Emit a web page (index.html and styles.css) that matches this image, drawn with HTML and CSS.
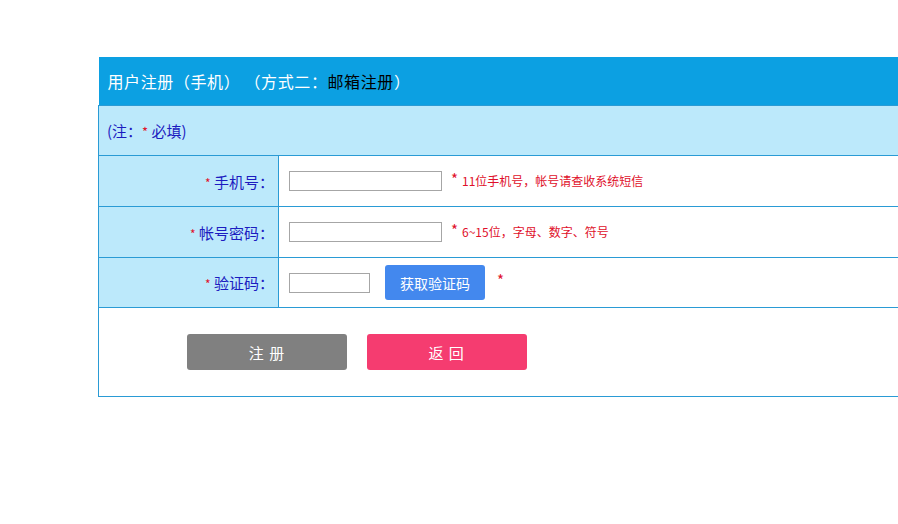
FILE: index.html
```html
<!DOCTYPE html>
<html lang="zh-CN">
<head>
	<meta charset="UTF-8">
	<title>用户注册</title>
	<link rel="stylesheet" href="styles.css">
</head>
<body>
	<div id="wrap">
		<table class="regTable">
			<tr>
				<td colspan="2" class="title">用户注册（手机）&nbsp;（方式二：<a href="#">邮箱注册</a>）</td>
			</tr>
			<tr>
				<td colspan="2" class="note">(注：<span class="star">*</span> 必填)</td>
			</tr>
			<tr class="row">
				<td class="label"><span class="star">*</span> 手机号：</td>
				<td class="field"><input type="text" class="txt"><span class="req">*</span><span class="hint">11位手机号，帐号请查收系统短信</span></td>
			</tr>
			<tr class="row">
				<td class="label"><span class="star">*</span> 帐号密码：</td>
				<td class="field"><input type="password" class="txt"><span class="req">*</span><span class="hint">6~15位，字母、数字、符号</span></td>
			</tr>
			<tr class="row rowLast">
				<td class="label"><span class="star">*</span> 验证码：</td>
				<td class="field"><input type="text" class="txt code"><button class="btnCode">获取验证码</button><span class="req reqCode">*</span></td>
			</tr>
			<tr>
				<td colspan="2" class="btns">
					<button class="btn btnReg">注 册</button>
					<button class="btn btnBack">返 回</button>
				</td>
			</tr>
		</table>
	</div>
</body>
</html>
```

FILE: styles.css
```css
*{margin:0;padding:0;}
html,body{overflow:hidden;}
body{font-family:"Noto Sans CJK SC","Microsoft YaHei",sans-serif;background:#fff;}
#wrap{margin:57px 0 0 98px;width:900px;}
.regTable{width:100%;border-collapse:collapse;}
.regTable td{border:1px solid #2a9bd5;border-right:none;}
.title{height:48px;background:#0ca0e2;color:#fff;font-size:16px;letter-spacing:0.6px;padding-left:9px;border-top:none !important;border-left:none !important;}
.title a{color:#000;text-decoration:none;}
.note{height:49px;background:#bce9fb;color:#1c1cc0;font-size:15px;padding-left:8px;border-top:none !important;}
.star{color:#e0102a;font-size:13px;}
.row td{height:50px;}
.rowLast td{height:49px;}
.label{width:175px;background:#bce9fb;color:#1c1cc0;font-size:15px;text-align:right;padding-right:4px;}
.label .star{font-size:12px;}
.field{background:#fff;padding-left:10px;font-size:12px;color:#e0102a;}
.txt{width:151px;height:18px;border:1px solid #a6a6a6;vertical-align:middle;}
.txt.code{width:79px;}
.req{font-size:15px;margin:0 4px 0 9px;vertical-align:middle;position:relative;top:-3px;}
.hint{vertical-align:middle;}
.btnCode{width:100px;height:35px;margin-left:15px;border:none;border-radius:3px;background:#4388ee;color:#fff;font-size:14px;font-family:inherit;vertical-align:middle;}
.reqCode{margin-left:12px;}
.btns{height:88px;padding-left:88px;}
.btn{width:160px;height:36px;border:none;border-radius:3px;color:#fff;font-size:15px;letter-spacing:1px;font-family:inherit;vertical-align:middle;}
.btnReg{background:#808080;}
.btnBack{background:#f53c70;margin-left:16px;}
```
